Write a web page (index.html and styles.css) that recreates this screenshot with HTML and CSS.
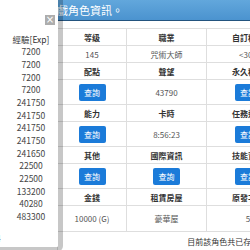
FILE: index.html
```
<!DOCTYPE html>
<html lang="zh-Hant">
<head>
  <meta charset="UTF-8" />
  <meta name="viewport" content="width=device-width, initial-scale=1.0" />
  <title>角色資訊</title>
  <link rel="stylesheet" href="styles.css">
</head>
<body>
  <div class="modal">
    <div class="modal-head">遊戲角色資訊。</div>
    <div class="modal-body">
      <table class="info">
        <tr class="r-head"><th>等级</th><th>職業</th><th>自訂稱號</th><th>公會</th><th>狀態</th></tr>
        <tr class="r-val"><td>145</td><td>咒術大師</td><td>&lt;30&gt;</td><td>無</td><td>正常</td></tr>
        <tr class="r-head"><th>配點</th><th>聲望</th><th>永久稱號</th><th>寵物</th><th>背包</th></tr>
        <tr class="r-btn"><td><button>查詢</button></td><td>43790</td><td><button>查詢</button></td><td><button>查詢</button></td><td><button>查詢</button></td></tr>
        <tr class="r-head"><th>能力</th><th>卡時</th><th>任務進度</th><th>倉庫</th><th>郵件</th></tr>
        <tr class="r-btn"><td><button>查詢</button></td><td>8:56:23</td><td><button>查詢</button></td><td><button>查詢</button></td><td><button>查詢</button></td></tr>
        <tr class="r-head"><th>其他</th><th>國際資訊</th><th>技能資訊</th><th>好友</th><th>紀錄</th></tr>
        <tr class="r-btn"><td><button>查詢</button></td><td><button>查詢</button></td><td><button>查詢</button></td><td><button>查詢</button></td><td><button>查詢</button></td></tr>
        <tr class="r-head"><th>金錢</th><th>租賃房屋</th><th>原發次數</th><th>點數</th><th>登入</th></tr>
        <tr class="r-tall"><td>10000 (G)</td><td>豪華屋</td><td>5</td><td>0</td><td>2</td></tr>
        <tr class="r-foot"><td colspan="5">目前該角色共已存放經驗值 1377330 點</td></tr>
      </table>
    </div>
  </div>

  <div class="popup">
    <div class="popup-top"><span class="close">×</span></div>
    <div class="popup-title">經驗[Exp]</div>
    <ul class="exp-list">
      <li>7200</li>
      <li>7200</li>
      <li>7200</li>
      <li>7200</li>
      <li>241750</li>
      <li>241750</li>
      <li>241750</li>
      <li>241750</li>
      <li>241650</li>
      <li>22500</li>
      <li>22500</li>
      <li>133200</li>
      <li>40280</li>
      <li>483300</li>
    </ul>
    <div class="popup-foot">4</div>
  </div>
</body>
</html>
```

FILE: styles.css
```
html, body {
  margin: 0;
  padding: 0;
  overflow: hidden;
  background: #fff;
  font-family: "Noto Sans CJK TC", "Noto Sans", sans-serif;
}
.modal {
  width: 460px;
}
.modal-head {
  height: 20px;
  line-height: 20px;
  padding-left: 46px;
  color: #fff;
  font-size: 11px;
  background: linear-gradient(#62a7dc, #4b93cf);
  border-bottom: 1px solid #23537e;
}
.modal-body {
  padding: 7px 0 0 57px;
}
.info {
  border-collapse: collapse;
  table-layout: fixed;
  width: 399px;
}
.info th, .info td {
  border: 1px solid #dedede;
  padding: 0;
  text-align: center;
  vertical-align: middle;
  font-size: 8px;
  white-space: nowrap;
}
.info th:nth-child(1), .info td:nth-child(1) { width: 68px; }
.info th:nth-child(2), .info td:nth-child(2) { width: 79px; }
.info th {
  color: #333;
  font-weight: bold;
}
.info td {
  color: #555;
}
.r-head, .r-val { height: 17px; }
.r-btn { height: 25px; }
.r-tall { height: 26px; }
.r-foot { height: 20px; }
.r-foot td { color: #333; }
.info button {
  width: 27px;
  height: 17px;
  padding: 0;
  border: none;
  border-radius: 2px;
  background: #1b7bd9;
  color: #fff;
  font-family: inherit;
  font-size: 8px;
  display: block;
  margin: 0 auto;
}
.popup {
  position: absolute;
  left: -8px;
  top: -6px;
  width: 54px;
  height: 248px;
  padding-left: 7px;
  background: #fff;
  border: 5px solid rgba(0, 0, 0, 0.22);
  border-radius: 6px;
  background-clip: padding-box;
  text-align: center;
  color: #444;
  font-size: 8.5px;
}
.popup-top {
  display: flex;
  justify-content: flex-end;
  padding-top: 16px;
  margin-right: 3px;
}
.close {
  width: 10px;
  height: 10px;
  line-height: 10px;
  background: #adadad;
  color: #fff;
  font-size: 10px;
  font-family: "DejaVu Sans", sans-serif;
}
.popup-title {
  margin-top: 7.6px;
  line-height: 12.7px;
  color: #333;
}
.exp-list {
  list-style: none;
  margin: 0;
  padding: 0;
  line-height: 12.65px;
}
.popup-foot {
  margin-top: 10px;
  text-align: left;
  margin-left: -8px;
  color: #333;
}
```
